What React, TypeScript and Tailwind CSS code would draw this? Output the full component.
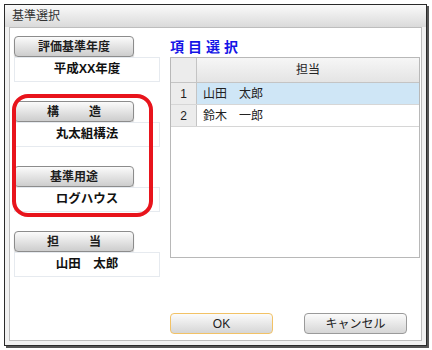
const FONT = { fontFamily: '"Liberation Sans", "Noto Sans CJK JP", sans-serif' };

const FIELDS = [
  { label: "評価基準年度", value: "平成XX年度", spaced: false },
  { label: "構造", value: "丸太組構法", spaced: true },
  { label: "基準用途", value: "ログハウス", spaced: false },
  { label: "担当", value: "山田　太郎", spaced: true },
];

const ROWS = ["山田　太郎", "鈴木　一郎"];

function LabelButton({ label, spaced }: { label: string; spaced: boolean }) {
  return (
    <div className="h-[21px] w-[120px] rounded-[4px] border border-[#8c8c8c] bg-gradient-to-b from-[#fbfbfb] to-[#cdcdcd] shadow-[0_1px_1px_rgba(0,0,0,0.25)] flex items-center justify-center text-[12px] font-bold text-[#1e1e1e]">
      {spaced ? (
        <span className="flex gap-[30px]">
          {label.split("").map((c) => (
            <span key={c}>{c}</span>
          ))}
        </span>
      ) : (
        label
      )}
    </div>
  );
}

function Field({ label, value, spaced }: { label: string; value: string; spaced: boolean }) {
  return (
    <div className="flex flex-col">
      <LabelButton label={label} spaced={spaced} />
      <div className="h-[25px] w-[146px] border border-[#e6eaef] bg-white flex items-center justify-center text-[12.5px] font-bold text-[#111]">
        {value}
      </div>
    </div>
  );
}

export default function App() {
  return (
    <div className="w-[432px] h-[350px] bg-white pt-[4px] pl-[4px]" style={FONT}>
      <div className="w-[423px] h-[342px] border border-[#2a2a2a] shadow-[2px_2px_0_#555] flex flex-col bg-[#f4f4f4]">
        <div className="h-[22px] shrink-0 bg-gradient-to-b from-[#fafafa] to-[#dadada] flex items-center pl-[7px] text-[12px] text-[#333]">
          基準選択
        </div>
        <div className="flex-1 px-[4px] pb-[4px] bg-[#f1f1f1]">
          <div className="relative h-full border border-[#bdbdbd] bg-white flex">
            {/* left column */}
            <div className="pl-[4px] pt-[8px] w-[150px] flex flex-col gap-[19px]">
              {FIELDS.map((f) => (
                <Field key={f.label} label={f.label} value={f.value} spaced={f.spaced} />
              ))}
            </div>

            {/* right column */}
            <div className="ml-[10px] pr-[1px] pt-[9px] pb-[6px] flex-1 flex flex-col">
              <div className="h-[20px] flex items-center text-[14px] font-bold tracking-[4px] text-[#1414e6]">
                項目選択
              </div>
              <div className="h-[201px] border border-[#b8b8b8] bg-white">
                <div className="flex h-[25px] border-b border-[#c4c4c4] bg-gradient-to-b from-[#f6f6f6] to-[#e4e4e4]">
                  <div className="w-[26px] border-r border-[#c4c4c4] bg-[#ececec]" />
                  <div className="flex-1 flex items-center justify-center text-[12px] text-[#222]">担当</div>
                </div>
                {ROWS.map((name, i) => (
                  <div
                    key={name}
                    className={`flex h-[22px] border-b border-[#d6d6d6] ${i === 0 ? "bg-[#cfe6f6]" : "bg-white"}`}
                  >
                    <div className="w-[26px] border-r border-[#c4c4c4] bg-[#ececec] flex items-center justify-center text-[12px] text-[#222]">
                      {i + 1}
                    </div>
                    <div className="flex-1 flex items-center pl-[6px] text-[12px] text-[#222]">{name}</div>
                  </div>
                ))}
              </div>

              <div className="mt-auto flex gap-[31px]">
                <button className="h-[21px] w-[103px] rounded-[4px] border border-[#f2c266] bg-gradient-to-b from-[#fbfbfb] to-[#d6d6d6] text-[12px] text-[#222]">
                  OK
                </button>
                <button className="h-[21px] w-[103px] rounded-[4px] border border-[#9a9a9a] bg-gradient-to-b from-[#fbfbfb] to-[#d6d6d6] text-[12px] text-[#222]">
                  キャンセル
                </button>
              </div>
            </div>

            {/* red highlight ring */}
            <div className="absolute left-[2px] top-[66px] w-[141px] h-[123px] rounded-[16px] border-[4px] border-[#e8141c]" />
          </div>
        </div>
      </div>
    </div>
  );
}
